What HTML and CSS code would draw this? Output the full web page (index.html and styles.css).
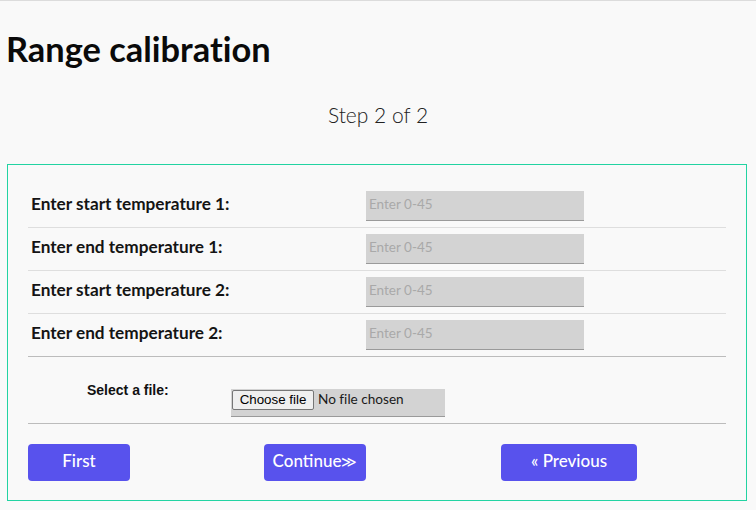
FILE: index.html
```html
<!DOCTYPE html>
<html lang="en">
<head>
<meta charset="utf-8">
<title>Range calibration</title>
<link rel="stylesheet" href="styles.css">
</head>
<body>
<h1 class="title">Range calibration</h1>
<p class="step">Step 2 of 2</p>
<form class="panel">
  <div class="row">
    <label class="label" for="s1">Enter start temperature 1:</label>
    <input class="field" id="s1" type="text" placeholder="Enter 0-45">
  </div>
  <div class="row">
    <label class="label" for="e1">Enter end temperature 1:</label>
    <input class="field" id="e1" type="text" placeholder="Enter 0-45">
  </div>
  <div class="row">
    <label class="label" for="s2">Enter start temperature 2:</label>
    <input class="field" id="s2" type="text" placeholder="Enter 0-45">
  </div>
  <div class="row row-last">
    <label class="label" for="e2">Enter end temperature 2:</label>
    <input class="field" id="e2" type="text" placeholder="Enter 0-45">
  </div>
  <div class="file-row">
    <span class="file-label">Select a file:</span>
    <label class="file">
      <input class="file-input" type="file">
      <span class="file-btn">Choose file</span>
      <span class="file-name">No file chosen</span>
    </label>
  </div>
  <div class="actions">
    <button type="button" class="btn btn-first">First</button>
    <button type="button" class="btn btn-continue">Continue<span class="chev">≫</span></button>
    <button type="button" class="btn btn-prev">« Previous</button>
  </div>
</form>
</body>
</html>
```
FILE: styles.css
```css
html, body {
  margin: 0;
  padding: 0;
}
body {
  background: #f9f9f9;
  border-top: 1px solid #dcdcdc;
  font-family: Lato, "Open Sans", sans-serif;
  font-variant-ligatures: none;
  color: #111;
  width: 756px;
  height: 509px;
  overflow: hidden;
}
.title {
  margin: 27px 0 0 6px;
  font-size: 34.4px;
  font-weight: 700;
  line-height: 41px;
  color: #0a0a0a;
}
.step {
  margin: 33px 0 0 0;
  text-align: center;
  font-size: 21px;
  font-weight: 300;
  line-height: 25px;
  color: #222;
}
.panel {
  margin: 37px 0 0 7px;
  width: 740px;
  box-sizing: border-box;
  border: 1px solid #22d3a2;
  padding: 20px 20px 19px 20px;
}
.row {
  display: grid;
  grid-template-columns: 338px 218px;
  align-items: center;
  padding: 6px 0;
  border-bottom: 1px solid #dedede;
}
.row-last {
  border-bottom-color: #bcbcbc;
}
.label {
  padding: 0 0 5px 3px;
  font-size: 17.2px;
  font-weight: 700;
  line-height: 21px;
  color: #141414;
}
.field {
  box-sizing: border-box;
  width: 218px;
  height: 30px;
  margin: 0;
  padding: 0 3px 4px 3px;
  border: 0;
  border-bottom: 1px solid #9a9a9a;
  background: #d3d3d3;
  font-family: Lato, sans-serif;
  font-size: 13.5px;
  color: #222;
  outline: none;
}
.field::placeholder {
  color: #a9a9a9;
}
.file-row {
  display: flex;
  align-items: flex-start;
  padding: 25px 0 6px 59px;
  border-bottom: 1px solid #bcbcbc;
}
.file-label {
  width: 144px;
  font-family: "Liberation Sans", Arial, sans-serif;
  font-size: 14px;
  font-weight: 700;
  line-height: 16px;
  color: #111;
}
.file {
  box-sizing: border-box;
  display: flex;
  align-items: flex-start;
  width: 214px;
  height: 28px;
  margin: 7px 0 0 0;
  padding: 1px 1px 0 1px;
  background: #d3d3d3;
  border-bottom: 1px solid #9a9a9a;
  cursor: pointer;
}
.file-input {
  display: none;
}
.file-btn {
  box-sizing: border-box;
  height: 20px;
  width: 82px;
  margin-right: 4px;
  border: 1px solid #767676;
  border-radius: 2px;
  background: #efefef;
  font-family: "Liberation Sans", Arial, sans-serif;
  font-size: 13.33px;
  line-height: 18px;
  text-align: center;
  color: #000;
}
.file-name {
  font-family: Lato, sans-serif;
  font-size: 13.6px;
  line-height: 18px;
  color: #1a1a1a;
}
.actions {
  display: grid;
  grid-template-columns: 236px 237px 1fr;
  padding-top: 20px;
}
.btn {
  box-sizing: border-box;
  height: 37px;
  border: 0;
  border-radius: 4px;
  background: #5852ed;
  color: #fff;
  font-family: Lato, sans-serif;
  font-size: 17px;
  font-weight: 500;
  padding: 0 0 4px 0;
  cursor: pointer;
}
.chev {
  font-family: "DejaVu Sans", sans-serif;
  font-weight: 300;
  font-size: 15px;
}
.btn-first,
.btn-continue {
  width: 102px;
}
.btn-prev {
  width: 136px;
}
```
